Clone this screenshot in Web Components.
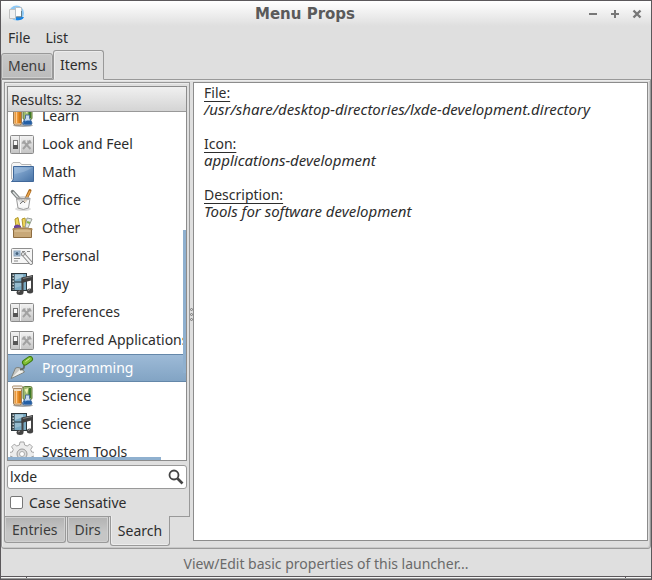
<!DOCTYPE html>
<html lang="en">
<head>
<meta charset="utf-8">
<title>Menu Props</title>
<style>
  body { margin: 0; color: #2d2d2d; background: #dfdfdf; font: 14px/20px "Noto Sans", "Open Sans", sans-serif; }
</style>
</head>
<body>
<app-window></app-window>
<script>
const define = (name, html, setup) => customElements.define(name, class extends HTMLElement {
  constructor() {
    super();
    this.attachShadow({ mode: 'open' }).innerHTML =
      '<style>*{box-sizing:border-box}button{font:inherit;color:inherit;background:none;border:0;margin:0;padding:0}</style>' + html;
  }
  connectedCallback() { if (setup) setup(this, this.shadowRoot); }
});

const flask = `
  <ellipse cx="13" cy="21.500" rx="10" ry="1.500" fill="#aaa"/>
  <rect x="3.500" y="3.500" width="8" height="17.500" rx="2" fill="#efdcc0" stroke="#9a7a55"/>
  <path d="M4.500 7h6.500v12.500h-6.500z" fill="#e58b25"/><path d="M6.500 7v12" stroke="#ffc888" stroke-width="1.500"/><path d="M10 7v12" stroke="#c06a10"/>
  <rect x="2.500" y="2" width="10" height="2.500" rx="1" fill="#f5eee6" stroke="#a78a68"/>
  <rect x="13" y="2.500" width="9" height="13" rx="1.500" fill="#9fb970" stroke="#5f7a3a"/>
  <path d="M18.500 4h2.500v10h-2.500z" fill="#3d7a28"/><path d="M14.500 5.500l4-1.500-1.500 6z" fill="#eef2b0"/>
  <path d="M15.500 11h4v3l2.500 5q0 2-2 2h-5.500q-2 0-2-2l3-5z" fill="#c8dcf0" stroke="#4c6f98"/>
  <path d="M14 16.500h7l1 3-1.500 1h-6l-1.500-1z" fill="#245fa5"/><path d="M15 17l2-1" stroke="#9cc4ee"/>`;
const film = `
  <rect x="1.500" y="1.500" width="15" height="17" fill="#78a9c2" stroke="#2b363b"/>
  <path d="M2 2h2.500v16H2z" fill="#3a464c"/>
  <path d="M3.200 2.500v15.500" stroke="#e4eaec" stroke-width="1.200" stroke-dasharray="1.400 1.600"/>
  <path d="M4.500 10h9" stroke="#2b363b"/><path d="M5 2.500h8v2.500l-8 3z" fill="#aacbdb"/><path d="M5 11h6v3l-6 2z" fill="#94bccf"/>
  <path d="M12.500 20V7L22 4.500v14" fill="none" stroke="#444" stroke-width="2"/>
  <path d="M11.500 5.500L23 3v5l-11.500 3z" fill="#3f3f3f"/><path d="M13 6.500l9-2" stroke="#808080"/>
  <ellipse cx="10" cy="20.500" rx="3.500" ry="2.500" fill="#444"/><ellipse cx="20" cy="19" rx="3.200" ry="2.500" fill="#444"/>
  <path d="M8 20l2-1M18 18.500l2-1" stroke="#999"/>`;
const ICONS = {
  flask, film,
  prefs: `
    <defs><linearGradient id="g" x2="0" y2="1"><stop stop-color="#f3f3f3"/><stop offset="1" stop-color="#c4c4c4"/></linearGradient></defs>
    <rect x=".5" y="3.500" width="23" height="18" rx="1" fill="url(#g)" stroke="#8b8b8b"/>
    <path d="M9.500 4v17" stroke="#aaa"/><path d="M10.500 4v17" stroke="#f5f5f5"/>
    <rect x="3.500" y="8.500" width="4" height="8" fill="#fafafa" stroke="#7a7a7a"/><path d="M3 13h5v4H3z" fill="#555"/>
    <path d="M13 9l7.500 8M20.500 8.500L13 17" stroke="#a2a2a2" stroke-width="2"/>
    <path d="M11.800 10.800q2.500.8 3.200-2.500M18 8.300q-.5 2.700 3.500 2.500" fill="none" stroke="#a2a2a2" stroke-width="1.500"/>`,
  folder: `
    <defs><linearGradient id="g" x2="1" y2="1"><stop stop-color="#9bbce0"/><stop offset="1" stop-color="#4672a5"/></linearGradient></defs>
    <path d="M1.500 19V4.500l1.500-2h7l1.500 2h9.500V19z" fill="#f5f5f5" stroke="#b6b6b6"/>
    <path d="M3.500 6.500h20v15h-22q2-1 2-3z" fill="url(#g)" stroke="#40689a"/>
    <path d="M4.500 14V7.500h18q-8 5-18 6.500z" fill="#b4cde8" opacity=".35"/>`,
  office: `
    <ellipse cx="13" cy="21" rx="8" ry="2" fill="#ddd"/>
    <path d="M2.500 3.500l9 10" stroke="#7b8080" stroke-width="3.500" stroke-linecap="round"/><path d="M3 4l8 9" stroke="#dfe2e2" stroke-width="1.500"/>
    <path d="M20 2.500L15 13" stroke="#a6671e" stroke-width="3" stroke-linecap="round"/><path d="M20 3l-5 10" stroke="#eda64a" stroke-width="1.500"/>
    <path d="M6.500 10.500h13.500l-1.500 9.500q-5 3-10.500 0z" fill="#f7f7f7" fill-opacity=".75" stroke="#999"/>
    <path d="M10 16l3-3 2 2" fill="none" stroke="#777"/>
    <ellipse cx="13.200" cy="10.500" rx="6.700" ry="1.500" fill="none" stroke="#aaa"/>`,
  other: `
    <path d="M5 3l3-1.500 2 10H6z" fill="#efd65c" stroke="#b19729"/><path d="M4 10q3-3 7 0v3H4z" fill="#6c4596"/>
    <path d="M12 3l3-1 1 9h-3z" fill="#efd65c" stroke="#b19729"/>
    <path d="M17 2l5 1-4 9h-3z" fill="#e4e8e4" stroke="#9ba19b"/><path d="M17 6l3 1" stroke="#84b34c" stroke-width="2"/>
    <path d="M3.500 12.500h18v9h-18z" fill="#c8a878" stroke="#8e6d41"/><path d="M2.500 13.500q10-3 20 0" fill="none" stroke="#ac8a59" stroke-width="1.500"/>
    <path d="M4.500 15h16" stroke="#e3caa0"/>`,
  personal: `
    <rect x="1.500" y="4.500" width="21" height="15" rx="1" fill="#f6f6f6" stroke="#8e8e8e"/>
    <rect x="4" y="7" width="6" height="5" fill="#a9c2da" stroke="#8aa2ba"/><circle cx="7" cy="9.500" r="1.500" fill="#46627c"/>
    <path d="M4 14.500h6M4 17h4M12 7.500h3M17 7.500h3" stroke="#888"/>
    <path d="M13 10l8 9" stroke="#888" stroke-width="4" stroke-linecap="round"/><path d="M13 10l8 9" stroke="#f4f4f4" stroke-width="2" stroke-linecap="round"/>
    <path d="M11 10.500q2 3 5-2" fill="none" stroke="#999" stroke-width="1.200"/>`,
  trowel: `
    <path d="M1 22.500L5.500 12q5-2 9 4z" fill="#c7c7c3" stroke="#7c817b"/><path d="M2 21.500l8-8 3.500 2.500z" fill="#f1f1ed"/>
    <path d="M10 13.500q5 0 4-4.500" fill="none" stroke="#626962" stroke-width="2"/>
    <path d="M15 6.500l5-3.500" stroke="#3c7a10" stroke-width="6" stroke-linecap="round"/>
    <path d="M15 6.500L20 3" stroke="#82bf36" stroke-width="4" stroke-linecap="round"/><path d="M15.500 5.500l4-3" stroke="#d2ee9d"/>`,
  gear: `
    <path d="M10 2h4l.6 3 2.600 1 2.600-1.800 2.600 2.600-1.700 2.700 1 2.500 3 .5v3.500l-3 .7-1 2.600 1.700 2.600-2.600 2.600-2.600-1.700-2.600 1-.6 3h-4l-.6-3-2.600-1-2.600 1.700-2.600-2.600 1.700-2.600-1-2.600-3-.7v-3.500l3-.5 1-2.500-1.700-2.700 2.600-2.600L6.800 6l2.600-1z" fill="#ececec" stroke="#a5a5a5"/>
    <circle cx="12" cy="14" r="5" fill="#dcdcdc" stroke="#999"/>
    <circle cx="12" cy="14" r="2.500" fill="#fff" stroke="#aaa"/>`
};

define('item-icon', `<style>:host{display:block;flex:none;width:24px;height:24px}svg{display:block}</style><span></span>`,
  (el, root) => { root.querySelector('span').innerHTML = `<svg width="24" height="24" viewBox="0 0 24 24" aria-hidden="true">${ICONS[el.getAttribute('name')] || ''}</svg>`; });

define('title-bar', `
<style>
  :host{display:grid;grid-template-columns:46px 1fr 88px;align-items:center;height:25px;flex:none;background:linear-gradient(#fff,#dfdfdf)}
  h1{margin:0;text-align:center;color:#5a5a5a;font:bold 15px/24px "DejaVu Sans",sans-serif}
  .logo{display:block;margin-left:6px}
  .controls{display:flex;gap:6px;justify-content:flex-end;padding-right:6px}
  button{width:16px;height:16px}
  button svg{display:block}
</style>
<svg class="logo" width="18" height="18" viewBox="0 0 18 18" aria-hidden="true">
  <circle cx="9.500" cy="8" r="7.500" fill="#8cc8f5"/><path d="M9 12h8q-2 4-8 3z" fill="#1683e5"/>
  <path d="M2.500 4.500h6v9h-6z" fill="#f0f0f0" stroke="#c0c0c0"/><path d="M8.500 2.500h6v9h-6z" fill="#fdfdfd" stroke="#b8c0c6"/>
  <path d="M14.500 6v6H9.500" fill="none" stroke="#5f7f90"/>
</svg>
<h1><slot></slot></h1>
<div class="controls">
  <button aria-label="Minimize"><svg width="16" height="16"><path d="M4 8h8" stroke="#777" stroke-width="2"/></svg></button>
  <button aria-label="Maximize"><svg width="16" height="16"><path d="M4 8h8M8 4v8" stroke="#777" stroke-width="2"/></svg></button>
  <button aria-label="Close"><svg width="16" height="16"><path d="M4.500 4.500l7 7m0-7l-7 7" stroke="#777" stroke-width="2.400"/></svg></button>
</div>`);

define('menu-bar', `
<style>:host{display:flex;flex:none;gap:15px;padding:2px 7px;height:24px}</style>
<button>File</button><button>List</button>`);

define('tab-button', `
<style>
  :host{display:block}
  button{display:block;height:26px;padding:0 6px;color:#3c3c3c;background:linear-gradient(#c8c8c8,#bcbcbc);border:1px solid #999;box-shadow:inset 0 0 0 1px #d0d0d0;border-radius:3px 3px 0 0}
  :host([bottom]) button{padding:0 7px;border-top:0;border-radius:0 0 3px 3px;background:linear-gradient(#b2b2b2,#c6c6c6 60%)}
  :host([active]) button{height:30px;color:#2d2d2d;background:#dfdfdf;border-bottom-color:#dfdfdf;box-shadow:inset 1px 1px #ececec}
  :host([bottom][active]) button{border-bottom-color:#999;box-shadow:inset 1px -1px #ececec}
</style>
<button role="tab"><slot></slot></button>`,
  (el, root) => root.querySelector('button').setAttribute('aria-selected', el.hasAttribute('active')));

define('tab-strip', `
<style>
  :host{display:flex;flex:none;align-items:flex-end;position:relative;z-index:1;margin-bottom:-1px}
  :host([bottom]){gap:1px;align-items:flex-start;margin:-1px 0 0}
  ::slotted(tab-button:not([active])){margin-bottom:1px}
  :host([bottom]) ::slotted(tab-button:not([active])){margin:1px 0 0}
</style><slot></slot>`);

define('launcher-row', `
<style>
  :host{display:flex;align-items:center;gap:8px;height:28px;padding:0 3px 0 2px;white-space:nowrap;border:solid transparent;border-width:1px 0}
  :host([selected]){color:#fff;background:linear-gradient(#9dbad7,#82a4c4);border-color:#6487a9}
  span{min-width:0;overflow:hidden}
</style><item-icon></item-icon><span><slot></slot></span>`,
  (el, root) => {
    const icon = document.createElement('item-icon');
    icon.setAttribute('name', el.getAttribute('icon'));
    root.querySelector('item-icon').replaceWith(icon);
    el.setAttribute('role', 'option');
    el.setAttribute('aria-selected', el.hasAttribute('selected'));
  });

define('result-list', `
<style>
  :host{display:flex;flex-direction:column;flex:1;min-height:0;border:1px solid #8c8c8c;background:#fff}
  .head{flex:none;height:25px;padding:2px 3px 0;text-align:left;border-bottom:1px solid #999;background:linear-gradient(#f0f0f0,#d4d4d4)}
  .view{flex:1;min-height:0;overflow:hidden;position:relative}
  .rows{margin-top:-10px}
  .v,.h{position:absolute;background:#8fb0cf}
  .v{right:0;top:34%;width:3px;height:41%}
  .h{left:0;bottom:0;height:3px;width:86%}
</style>
<button class="head">Results: 32</button>
<div class="view"><div class="rows" role="listbox" aria-label="Results"><slot></slot></div><div class="v"></div><div class="h"></div></div>`);

define('search-form', `
<style>
  :host{display:block;flex:none;padding-top:4px}
  .field{display:flex;align-items:center;height:24px;background:#fff;border:1px solid #999;border-radius:3px;padding-right:1px}
  input[type=search]{flex:1;min-width:0;height:20px;border:0;outline:0;background:none;padding:0 2px;margin:0;font:inherit;color:inherit;appearance:none}
  .check{display:flex;align-items:center;gap:6px;height:27px;padding-left:3px}
  input[type=checkbox]{appearance:none;width:13px;height:13px;margin:0;background:#fff;border:1px solid #777;border-radius:2px}
  svg{display:block}
</style>
<div class="field"><input type="search" value="lxde" aria-label="Search">
<button aria-label="Find"><svg width="18" height="18" viewBox="0 0 18 18"><circle cx="7" cy="7" r="4.500" fill="none" stroke="#444" stroke-width="1.800"/><path d="M10.500 10.500l5 5" stroke="#444" stroke-width="2.600"/></svg></button></div>
<label class="check"><input type="checkbox">Case Sensative</label>`);

define('detail-view', `
<style>
  :host{display:block;background:#fff;border:1px solid #8c8c8c;padding:1px 10px 0;line-height:17px;overflow:hidden}
  dl{margin:0}dt{text-decoration:underline;text-underline-offset:3px}dd{margin:0 0 17px;font-size:15px;font-style:italic}
</style>
<dl>
  <dt>File:</dt><dd>/usr/share/desktop-directories/lxde-development.directory</dd>
  <dt>Icon:</dt><dd>applications-development</dd>
  <dt>Description:</dt><dd>Tools for software development</dd>
</dl>`);

define('app-window', `
<style>
  :host{display:flex;flex-direction:column;height:100vh;box-sizing:border-box;border:1px solid #5b585b;background:#dfdfdf}
  .page{flex:1;min-height:0;display:grid;grid-template-columns:186px 3px 1fr;border:1px solid #999;box-shadow:inset 1px 1px #ececec,inset -1px -1px #c8c8c8;border-radius:0 0 3px 3px;padding:2px}
  .side{display:flex;flex-direction:column;min-height:0}
  .panel{flex:1;min-height:0;display:flex;flex-direction:column;border:1px solid #999;box-shadow:inset 1px 1px #ececec;padding:3px 2px 0}
  .grip{align-self:center;display:grid;gap:2px}
  .grip i{width:3px;height:3px;border:1px solid #777;border-radius:50%}
  detail-view{margin-bottom:5px}
  footer{flex:none;height:27px;padding-top:5px;text-align:center;color:#6a6a6a}
  .edge{flex:none;height:3px;display:grid;grid-template-columns:25px 1fr 25px;gap:1px;background:#5b585b;border-top:1px solid #5b585b;border-bottom:1px solid #999}
  .edge i{background:#f4f4f4}
</style>
<title-bar>Menu Props</title-bar>
<menu-bar></menu-bar>
<tab-strip role="tablist"><tab-button>Menu</tab-button><tab-button active>Items</tab-button></tab-strip>
<div class="page">
  <div class="side">
    <div class="panel">
      <result-list>
        <launcher-row icon="flask">Learn</launcher-row>
        <launcher-row icon="prefs">Look and Feel</launcher-row>
        <launcher-row icon="folder">Math</launcher-row>
        <launcher-row icon="office">Office</launcher-row>
        <launcher-row icon="other">Other</launcher-row>
        <launcher-row icon="personal">Personal</launcher-row>
        <launcher-row icon="film">Play</launcher-row>
        <launcher-row icon="prefs">Preferences</launcher-row>
        <launcher-row icon="prefs">Preferred Applications</launcher-row>
        <launcher-row icon="trowel" selected>Programming</launcher-row>
        <launcher-row icon="flask">Science</launcher-row>
        <launcher-row icon="film">Science</launcher-row>
        <launcher-row icon="gear">System Tools</launcher-row>
      </result-list>
      <search-form></search-form>
    </div>
    <tab-strip bottom role="tablist"><tab-button bottom>Entries</tab-button><tab-button bottom>Dirs</tab-button><tab-button bottom active>Search</tab-button></tab-strip>
  </div>
  <div class="grip"><i></i><i></i><i></i></div>
  <detail-view></detail-view>
</div>
<footer>View/Edit basic properties of this launcher...</footer>
<div class="edge"><i></i><i></i><i></i></div>`);
</script>
</body>
</html>
